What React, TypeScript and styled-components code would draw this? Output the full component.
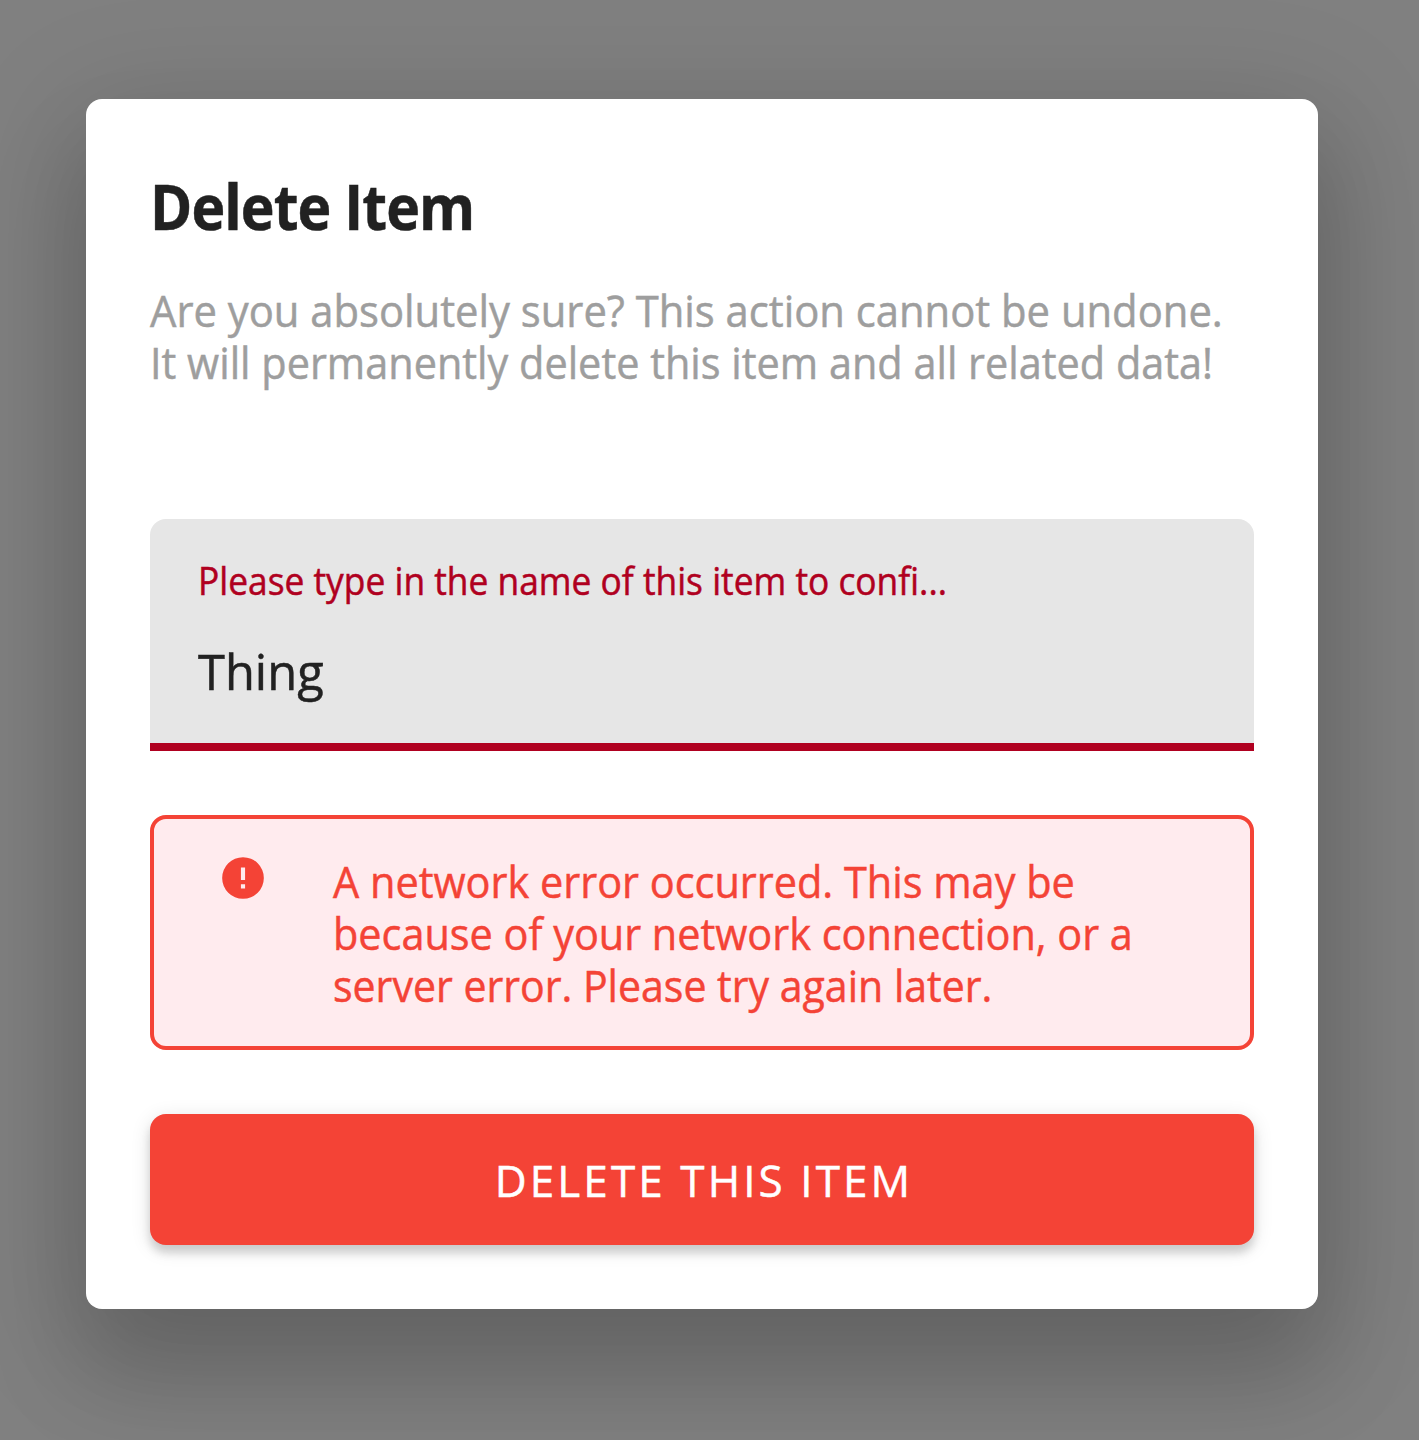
import React from "react";
import styled, { createGlobalStyle } from "styled-components";

const GlobalStyle = createGlobalStyle`
  *, *::before, *::after { box-sizing: border-box; }
  html, body { margin: 0; padding: 0; height: 100%; overflow: hidden; background: #808080; }
  body { font-family: "Open Sans", "Noto Sans", sans-serif; }
`;

const Overlay = styled.div`
  display: flex;
  align-items: flex-start;
  width: 1419px;
  height: 1440px;
  padding: 99px 101px 0 86px;
  background: #808080;
  overflow: hidden;
`;

const Dialog = styled.section`
  display: flex;
  flex-direction: column;
  width: 1232px;
  height: 1210px;
  padding: 74px 64px 64px;
  border-radius: 16px;
  background: #fff;
  box-shadow:
    0 64px 96px 8px rgba(0, 0, 0, 0.14),
    0 24px 120px 20px rgba(0, 0, 0, 0.12);
`;

const Line = styled.span<{ $condense?: number; $track?: number }>`
  display: block;
  width: max-content;
  white-space: nowrap;
  letter-spacing: ${(p) => p.$track ?? 0}px;
  transform: scaleX(${(p) => p.$condense ?? 1});
  transform-origin: left center;
  -webkit-text-stroke: 0.5px currentColor;
`;

const Title = styled.h1`
  margin: 0;
  color: #212121;
  font-size: 63px;
  font-weight: 700;
  line-height: 65px;
`;

const Description = styled.p`
  margin: 46px 0 0;
  color: #9e9e9e;
  font-size: 44px;
  line-height: 52px;
`;

const Field = styled.label`
  display: flex;
  flex-direction: column;
  gap: 37px;
  height: 232px;
  margin-top: 131px;
  padding: 37px 48px 0;
  border-bottom: 8px solid #b00020;
  border-radius: 16px 16px 0 0;
  background: #e6e6e6;
`;

const FieldLabel = styled.span`
  color: #b00020;
  font-size: 38px;
  line-height: 48px;
`;

const FieldValue = styled.span`
  color: #212121;
  font-size: 50px;
  line-height: 60px;
`;

const Alert = styled.div`
  display: flex;
  align-items: flex-start;
  height: 235px;
  margin-top: 64px;
  padding: 34px 60px 0 64px;
  border: 4px solid #f44336;
  border-radius: 16px;
  background: #ffebee;
  color: #f44336;
`;

const AlertIcon = styled.svg`
  flex: none;
  width: 50px;
  height: 50px;
  fill: currentColor;
`;

const AlertText = styled.p`
  margin: 2px 0 0 65px;
  font-size: 44px;
  line-height: 52px;
`;

const DeleteButton = styled.button`
  display: flex;
  justify-content: center;
  align-items: center;
  height: 131px;
  margin-top: 64px;
  padding: 1px 0 0 4px;
  border: 0;
  border-radius: 16px;
  background: #f44336;
  color: #fff;
  font-family: inherit;
  font-size: 44px;
  line-height: 52px;
  box-shadow:
    0 8px 8px 0 rgba(0, 0, 0, 0.14),
    0 4px 20px 0 rgba(0, 0, 0, 0.12);
`;

export default function App() {
  return (
    <>
      <GlobalStyle />
      <Overlay>
        <Dialog role="dialog">
          <Title><Line $condense={0.907} $track={-1}>Delete Item</Line></Title>
          <Description>
            <Line $condense={0.949}>Are you absolutely sure? This action cannot be undone.</Line>
            <Line $condense={0.9415}>It will permanently delete this item and all related data!</Line>
          </Description>
          <Field>
            <FieldLabel><Line $condense={0.93}>Please type in the name of this item to confi...</Line></FieldLabel>
            <FieldValue><Line $condense={0.977}>Thing</Line></FieldValue>
          </Field>
          <Alert role="alert">
            <AlertIcon viewBox="0 0 24 24">
              <path d="M13 13h-2V7h2m0 10h-2v-2h2M12 2A10 10 0 0 0 2 12a10 10 0 0 0 10 10 10 10 0 0 0 10-10A10 10 0 0 0 12 2z" />
            </AlertIcon>
            <AlertText>
              <Line $condense={0.942}>A network error occurred. This may be</Line>
              <Line $condense={0.941}>because of your network connection, or a</Line>
              <Line $condense={0.933}>server error. Please try again later.</Line>
            </AlertText>
          </Alert>
          <DeleteButton type="button"><Line $track={3.1}>DELETE THIS ITEM</Line></DeleteButton>
        </Dialog>
      </Overlay>
    </>
  );
}
